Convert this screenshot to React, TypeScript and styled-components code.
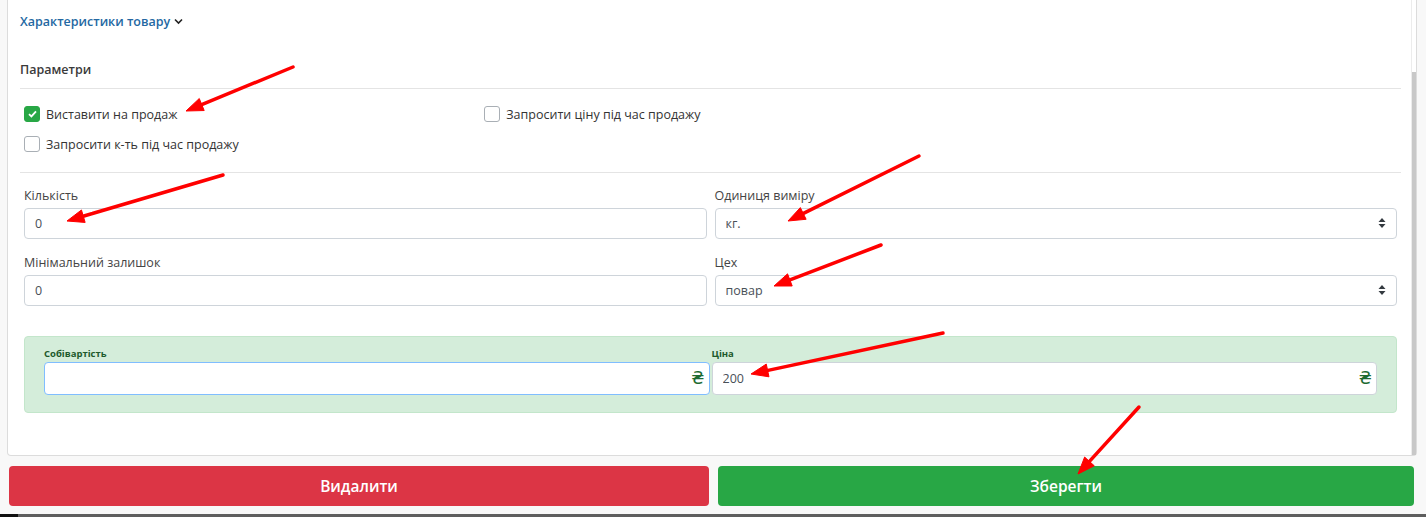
import styled, { createGlobalStyle } from "styled-components";

const GlobalStyle = createGlobalStyle`
  html, body {
    margin: 0;
    padding: 0;
    background: #f8f8f8;
    font-family: "Open Sans", "Liberation Sans", Arial, sans-serif;
  }
  * {
    box-sizing: border-box;
  }
`;

// Layout
const Page = styled.div`
  position: relative;
  width: 1426px;
  height: 517px;
  display: flex;
  flex-direction: column;
  overflow: hidden;
`;

const Card = styled.div`
  margin: 0 9px 0 7px;
  height: 456px;
  display: flex;
  background: #fff;
  border: 1px solid #dcdcdc;
  border-top: none;
  border-radius: 0 0 4px 4px;
`;

const CardBody = styled.div`
  flex: 1;
  padding: 0 10px 0 12px;
`;

const ScrollTrack = styled.div`
  width: 5px;
  display: flex;
  flex-direction: column;
  border-left: 1px solid #ececec;
`;

const ScrollThumb = styled.div`
  flex: 1;
  margin-top: 72px;
  background: #c8c8c8;
`;

const ToggleHeader = styled.div`
  height: 42px;
  display: flex;
  align-items: center;
  gap: 4px;
  color: #2468a2;
  font-size: 12.5px;
  font-weight: 600;
`;

const SectionTitle = styled.div`
  padding: 18px 0 8px;
  line-height: 20px;
  font-size: 12.5px;
  font-weight: 600;
  color: #3a3a3a;
  border-bottom: 1px solid #e4e4e4;
`;

const CheckGrid = styled.div`
  display: grid;
  grid-template-columns: repeat(3, 1fr);
  padding: 10px 0 13px;
  border-bottom: 1px solid #e4e4e4;
`;

const CheckItem = styled.label`
  height: 30px;
  padding-left: 4px;
  display: flex;
  align-items: center;
  gap: 6px;
  font-size: 12.5px;
  color: #333;
`;

const Box = styled.span<{ $checked?: boolean }>`
  width: 16px;
  height: 16px;
  border-radius: 3px;
  display: flex;
  align-items: center;
  justify-content: center;
  background: ${(p) => (p.$checked ? "#28a745" : "#fff")};
  border: 1px solid ${(p) => (p.$checked ? "#28a745" : "#a9afb5")};
`;

const FormGrid = styled.div`
  display: grid;
  grid-template-columns: 1fr 1fr;
  column-gap: 8px;
  row-gap: 14px;
  padding: 13px 4px 0;
`;

const Group = styled.div`
  display: flex;
  flex-direction: column;
  gap: 2px;
`;

const Label = styled.div`
  line-height: 20px;
  font-size: 12.5px;
  color: #444;
`;

const Field = styled.div`
  position: relative;
`;

const Input = styled.input<{ $focus?: boolean }>`
  width: 100%;
  height: 31px;
  padding: 0 10px;
  font-family: inherit;
  font-size: 12.5px;
  color: #495057;
  background: #fff;
  border: 1px solid ${(p) => (p.$focus ? "#80bdff" : "#ced4da")};
  border-radius: 4px;
  outline: none;
`;

const Select = styled.select`
  width: 100%;
  height: 31px;
  padding: 0 10px;
  font-family: inherit;
  font-size: 12.5px;
  color: #495057;
  background: #fff;
  border: 1px solid #ced4da;
  border-radius: 4px;
  appearance: none;
  outline: none;
`;

const SelectIcon = styled.svg`
  position: absolute;
  right: 11px;
  top: 10px;
  pointer-events: none;
`;

const PriceBox = styled.div`
  margin: 30px 4px 0;
  padding: 10px 19px 17px;
  background: #d4edda;
  border: 1px solid #c3e6cb;
  border-radius: 4px;
  display: grid;
  grid-template-columns: 1fr 1fr;
  column-gap: 2px;
`;

const PriceLabel = styled.div`
  line-height: 14px;
  margin-bottom: 1px;
  font-size: 9.5px;
  font-weight: 700;
  color: #1e5a2c;
`;

const PriceInput = styled(Input)`
  height: 33px;
  padding-right: 28px;
`;

const Currency = styled.span`
  position: absolute;
  right: 5px;
  top: 5px;
  font-family: "DejaVu Sans", "Open Sans", sans-serif;
  font-size: 17px;
  line-height: 22px;
  color: #1d6b32;
`;

const ButtonRow = styled.div`
  display: grid;
  grid-template-columns: 700px 696px;
  gap: 9px;
  padding: 10px 0 0 9px;
`;

const Button = styled.button<{ $variant: "danger" | "success" }>`
  height: 40px;
  border: none;
  border-radius: 4px;
  font-family: inherit;
  font-size: 15.5px;
  font-weight: 600;
  color: #fff;
  background: ${(p) => (p.$variant === "danger" ? "#dc3545" : "#28a745")};
`;

const BottomEdge = styled.div`
  margin-top: auto;
  height: 3px;
  background: linear-gradient(to right, #111 0 18px, #5e5e5e 18px);
`;

const Overlay = styled.svg`
  position: absolute;
  left: 0;
  top: 0;
  pointer-events: none;
`;

const arrows: [number, number, number, number][] = [
  [293, 67, 186, 111],
  [223, 175, 67, 221],
  [919, 156, 788, 221],
  [881, 245, 774, 286],
  [943, 333, 751, 374],
  [1139, 407, 1078, 474],
];

function Arrow({ sx, sy, tx, ty }: { sx: number; sy: number; tx: number; ty: number }) {
  const dx = tx - sx;
  const dy = ty - sy;
  const len = Math.hypot(dx, dy);
  const ux = dx / len;
  const uy = dy / len;
  const bx = tx - ux * 17;
  const by = ty - uy * 17;
  const nx = -uy * 6.5;
  const ny = ux * 6.5;
  return (
    <g fill="#ff0000" stroke="#ff0000">
      <line x1={sx} y1={sy} x2={bx + ux * 2} y2={by + uy * 2} strokeWidth={3.5} strokeLinecap="round" />
      <polygon points={`${tx},${ty} ${bx + nx},${by + ny} ${bx - nx},${by - ny}`} strokeWidth={1} strokeLinejoin="round" />
    </g>
  );
}

function UpDown() {
  return (
    <SelectIcon width="8" height="10" viewBox="0 0 8 10">
      <path d="M4 0 L7.5 4 H0.5 Z M4 10 L0.5 6 H7.5 Z" fill="#343a40" />
    </SelectIcon>
  );
}

function App() {
  return (
    <Page>
      <GlobalStyle />
      <Card>
        <CardBody>
          <ToggleHeader>
            Характеристики товару
            <svg width="9" height="7" viewBox="0 0 9 7">
              <path d="M1 1.5 L4.5 5 L8 1.5" fill="none" stroke="#222" strokeWidth="1.6" />
            </svg>
          </ToggleHeader>
          <SectionTitle>Параметри</SectionTitle>
          <CheckGrid>
            <CheckItem>
              <Box $checked>
                <svg width="9" height="8" viewBox="0 0 9 8">
                  <path d="M1 4.2 L3.4 6.4 L8 1.4" fill="none" stroke="#fff" strokeWidth="1.8" />
                </svg>
              </Box>
              Виставити на продаж
            </CheckItem>
            <CheckItem>
              <Box />
              Запросити ціну під час продажу
            </CheckItem>
            <div />
            <CheckItem>
              <Box />
              Запросити к-ть під час продажу
            </CheckItem>
          </CheckGrid>
          <FormGrid>
            <Group>
              <Label>Кількість</Label>
              <Field>
                <Input defaultValue="0" />
              </Field>
            </Group>
            <Group>
              <Label>Одиниця виміру</Label>
              <Field>
                <Select defaultValue="kg">
                  <option value="kg">кг.</option>
                </Select>
                <UpDown />
              </Field>
            </Group>
            <Group>
              <Label>Мінімальний залишок</Label>
              <Field>
                <Input defaultValue="0" />
              </Field>
            </Group>
            <Group>
              <Label>Цех</Label>
              <Field>
                <Select defaultValue="cook">
                  <option value="cook">повар</option>
                </Select>
                <UpDown />
              </Field>
            </Group>
          </FormGrid>
          <PriceBox>
            <div>
              <PriceLabel>Собівартість</PriceLabel>
              <Field>
                <PriceInput $focus defaultValue="" />
                <Currency>₴</Currency>
              </Field>
            </div>
            <div>
              <PriceLabel>Ціна</PriceLabel>
              <Field>
                <PriceInput defaultValue="200" />
                <Currency>₴</Currency>
              </Field>
            </div>
          </PriceBox>
        </CardBody>
        <ScrollTrack>
          <ScrollThumb />
        </ScrollTrack>
      </Card>
      <ButtonRow>
        <Button $variant="danger">Видалити</Button>
        <Button $variant="success">Зберегти</Button>
      </ButtonRow>
      <BottomEdge />
      <Overlay width="1426" height="517">
        {arrows.map(([sx, sy, tx, ty], i) => (
          <Arrow key={i} sx={sx} sy={sy} tx={tx} ty={ty} />
        ))}
      </Overlay>
    </Page>
  );
}

export default App;
